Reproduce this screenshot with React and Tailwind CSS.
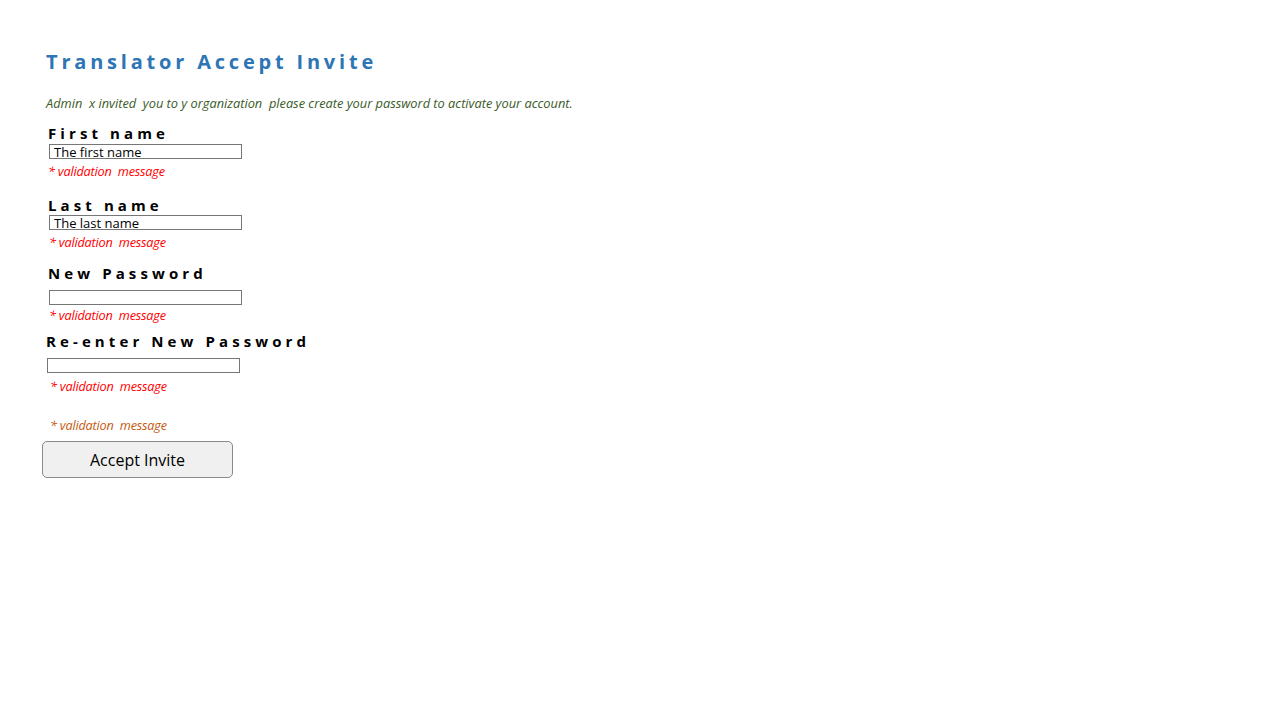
export default function App() {
  const font = { fontFamily: '"Open Sans", "Noto Sans", sans-serif' };
  const label = "text-[15px] leading-[18px] font-bold tracking-[4.1px] text-black";
  const val = "text-[12.7px] leading-[16px] italic whitespace-pre tracking-[-0.2px]";
  const inp = "w-[193px] h-[15px] border border-[#767676] text-[13px] leading-[13px] px-[4px] py-0 text-black outline-none";
  return (
    <div className="w-[1280px] h-[720px] bg-white relative" style={font}>
      <div className="flex flex-col items-start pl-[46px] pt-[48px]">
        <h1 className="text-[20px] leading-[28px] font-bold tracking-[3.8px] text-[#2e75b6] whitespace-pre">Translator Accept Invite</h1>
        <p className="mt-[19px] text-[12.8px] leading-[16px] italic text-[#3a5a28] whitespace-pre">Admin  x invited  you to y organization  please create your password to activate your account.</p>

        <div className={`ml-[2px] mt-[13px] ${label}`}>First name</div>
        <input className={`ml-[3px] mt-[2px] ${inp}`} defaultValue="The first name" style={font} />
        <div className={`ml-[2px] mt-[4px] ${val} text-[#ff0000]`}>* validation  message</div>

        <div className={`ml-[2px] mt-[17px] ${label}`}>Last name</div>
        <input className={`ml-[3px] mt-[1px] ${inp}`} defaultValue="The last name" style={font} />
        <div className={`ml-[3px] mt-[4px] ${val} text-[#ff0000]`}>* validation  message</div>

        <div className={`ml-[2px] mt-[14px] ${label}`}>New Password</div>
        <input type="password" className={`ml-[3px] mt-[8px] ${inp}`} />
        <div className={`ml-[3px] mt-[2px] ${val} text-[#ff0000]`}>* validation  message</div>

        <div className={`mt-[9px] ${label}`}>Re-enter New Password</div>
        <input type="password" className={`ml-[1px] mt-[8px] ${inp}`} />
        <div className={`ml-[4px] mt-[5px] ${val} text-[#ff0000]`}>* validation  message</div>

        <div className={`ml-[4px] mt-[23px] ${val} text-[#c55a11]`}>* validation  message</div>
        <button className="-ml-[4px] mt-[8px] w-[191px] h-[37px] rounded-[5px] bg-[#f0f0f0] border border-[#8a8a8a] text-[16px] text-black" style={font}>Accept Invite</button>
      </div>
    </div>
  );
}
